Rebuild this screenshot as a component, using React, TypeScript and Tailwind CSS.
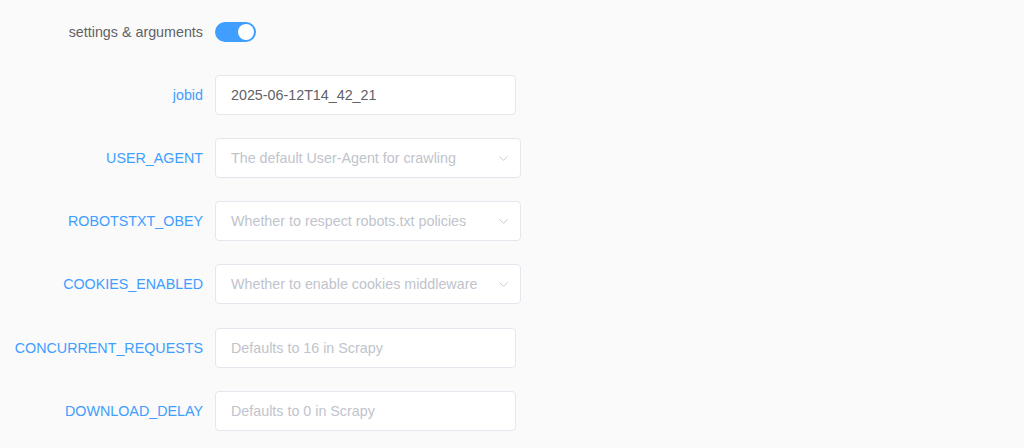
import { ChevronDown } from "lucide-react";

type Field = {
  label: string;
  kind: "input" | "select";
  value?: string;
  placeholder?: string;
};

const fields: Field[] = [
  { label: "jobid", kind: "input", value: "2025-06-12T14_42_21" },
  { label: "USER_AGENT", kind: "select", placeholder: "The default User-Agent for crawling" },
  { label: "ROBOTSTXT_OBEY", kind: "select", placeholder: "Whether to respect robots.txt policies" },
  { label: "COOKIES_ENABLED", kind: "select", placeholder: "Whether to enable cookies middleware" },
  { label: "CONCURRENT_REQUESTS", kind: "input", placeholder: "Defaults to 16 in Scrapy" },
  { label: "DOWNLOAD_DELAY", kind: "input", placeholder: "Defaults to 0 in Scrapy" },
];

function FormRow({ field }: { field: Field }) {
  return (
    <div className="flex items-center h-10 mb-[23px]">
      <label className="w-[215px] shrink-0 pr-3 pt-[2px] text-right text-[14.3px] text-[#409eff]">
        {field.label}
      </label>
      {field.kind === "input" ? (
        <div className="w-[301px] h-10 flex items-center px-[15px] pt-[2px] bg-white border border-[#e4e7ed] rounded">
          {field.value ? (
            <span className="text-[14.3px] text-[#606266]">{field.value}</span>
          ) : (
            <span className="text-[14.3px] text-[#c0c4cc]">{field.placeholder}</span>
          )}
        </div>
      ) : (
        <div className="w-[306px] h-10 flex items-center justify-between pl-[15px] pr-[9px] bg-white border border-[#e4e7ed] rounded">
          <span className="pt-[2px] text-[14.3px] text-[#c0c4cc]">{field.placeholder}</span>
          <ChevronDown size={15} strokeWidth={1.4} className="text-[#c0c4cc]" />
        </div>
      )}
    </div>
  );
}

export default function App() {
  return (
    <div
      className="w-[1024px] h-[448px] overflow-hidden bg-[#fafafa] pt-3"
      style={{ fontFamily: '"Liberation Sans", Arial, sans-serif' }}
    >
      {/* toggle row */}
      <div className="flex items-center h-10 mb-[23px]">
        <span className="w-[215px] shrink-0 pr-3 pt-[2px] text-right text-[14.3px] text-[#606266]">
          settings &amp; arguments
        </span>
        <button
          type="button"
          className="relative w-[41px] h-5 rounded-full bg-[#409eff]"
        >
          <span className="absolute top-[2px] right-[2px] w-4 h-4 rounded-full bg-white" />
        </button>
      </div>

      <div className="flex flex-col">
        {fields.map((f, i) => (
          <div key={f.label} className={i === 4 ? "mt-px" : ""}>
            <FormRow field={f} />
          </div>
        ))}
      </div>
    </div>
  );
}
